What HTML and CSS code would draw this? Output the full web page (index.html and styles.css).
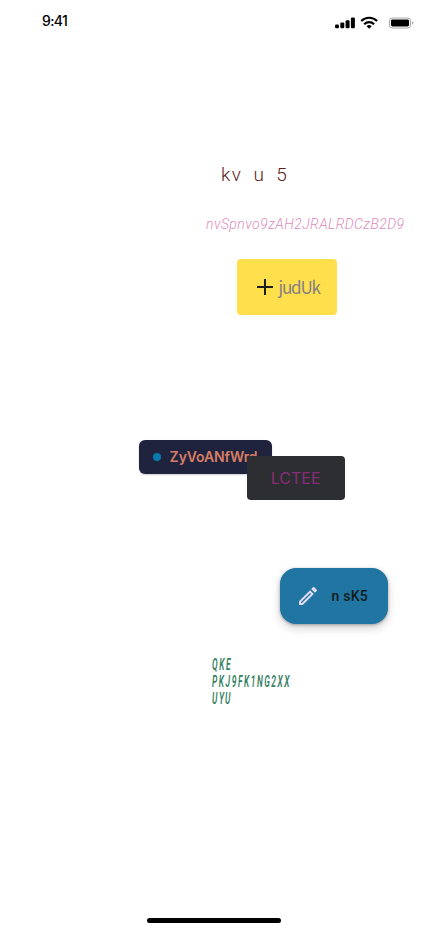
FILE: index.html
```
<!DOCTYPE html>
<html lang="en">
<head>
<meta charset="utf-8">
<meta name="viewport" content="width=device-width, initial-scale=1">
<title>Screen</title>
<link rel="stylesheet" href="styles.css">
</head>
<body>
<main class="screen">
  <header class="status">
    <span class="time">9:41</span>
    <svg class="indicators" width="80" height="14" viewBox="0 0 80 14">
      <rect x="0" y="8.5" width="4" height="3.7" rx="1.2"/>
      <rect x="5.3" y="6.5" width="4" height="5.7" rx="1.2"/>
      <rect x="10.6" y="4.2" width="4" height="8" rx="1.2"/>
      <rect x="15.9" y="1.5" width="4" height="10.7" rx="1.2"/>
      <g fill="none" stroke="#000" stroke-width="2.2">
        <path d="M26.2 5a11.3 11.3 0 0 1 15.9 0"/>
        <path d="M29.2 8.2a7 7 0 0 1 9.9 0"/>
      </g>
      <path d="M31.6 10.2a3.8 3.8 0 0 1 5.1 0L34.15 12.7z"/>
      <rect x="54.5" y="2" width="21" height="10" rx="2.8" fill="none" stroke="#a6a6a6"/>
      <rect x="56" y="3.5" width="18" height="7" rx="1.4"/>
      <path d="M77 5.2v3.6c.8-.3 1.3-1 1.3-1.8S77.8 5.5 77 5.2z" fill="#a6a6a6"/>
    </svg>
  </header>
  <h1 class="title">kv u 5</h1>
  <p class="code">nvSpnvo9zAH2JRALRDCzB2D9</p>
  <button class="add">
    <svg width="16" height="16" viewBox="0 0 16 16"><path d="M8 0v16M0 8h16" stroke="#1d1d1b" stroke-width="2"/></svg>
    <span class="add-label">judUk</span>
  </button>
  <div class="chip">
    <i class="dot"></i><span class="chip-label">ZyVoANfWrd</span>
    <button class="overlay"><span class="overlay-label">LCTEE</span></button>
  </div>
  <button class="edit">
    <svg width="24" height="24" viewBox="0 0 24 24"><path fill="#e4dcf8" d="M3 17.25V21h3.75L17.81 9.94l-3.75-3.75L3 17.25zM5.92 19H5v-.92l9.06-9.06.92.92L5.92 19zM20.71 5.63l-2.34-2.34a1 1 0 0 0-1.41 0l-1.83 1.83 3.75 3.75 1.83-1.83a1 1 0 0 0 0-1.41z"/></svg>
    <span class="edit-label">n sK5</span>
  </button>
  <p class="note">QKE<br>PKJ9FK1NG2XX<br>UYU</p>
  <div class="home"></div>
</main>
</body>
</html>
```
FILE: styles.css
```
* { box-sizing: border-box; }
body { margin: 0; background: #fff; }
button { border: 0; padding: 0; }
.screen {
  display: flex;
  flex-direction: column;
  align-items: flex-start;
  width: 428px;
  height: 926px;
  overflow: hidden;
  font-family: Roboto, sans-serif;
}
.status {
  display: flex;
  justify-content: space-between;
  width: 100%;
  height: 44px;
  padding: 12px 13px 0 42px;
}
.time { font: 500 14px/18px Inter, sans-serif; letter-spacing: -0.6px; }
.indicators { margin-top: 4px; }
.title {
  margin: 119px 0 0 221px;
  font-size: 19px;
  line-height: 24px;
  font-weight: 300;
  letter-spacing: 1.5px;
  word-spacing: 4.8px;
  color: #602020;
  white-space: nowrap;
}
.code {
  margin: 27px 0 0 206px;
  font-size: 14px;
  line-height: 20px;
  font-style: italic;
  font-weight: 300;
  letter-spacing: 0.44px;
  color: #dc8cbc;
  white-space: nowrap;
}
.add {
  display: flex;
  align-items: center;
  gap: 6px;
  width: 100px;
  height: 56px;
  margin: 25px 0 0 236.5px;
  padding-left: 20px;
  border-radius: 4px;
  background: #ffdf4b;
}
.add-label { font: 400 17px/24px "Noto Sans CJK SC", sans-serif; letter-spacing: -1.2px; color: #858085; }
.chip {
  position: relative;
  display: flex;
  align-items: center;
  width: 133px;
  height: 34px;
  margin: 125px 0 0 138.6px;
  padding-left: 14px;
  border-radius: 6px;
  background: #20233d;
  box-shadow: 0 1px 2px #0003;
}
.dot { width: 8px; height: 8px; margin-right: 9px; border-radius: 50%; background: #0879ad; }
.chip-label { font: 600 14px/20px Inter, sans-serif; letter-spacing: -0.1px; color: #d77e66; }
.overlay {
  position: absolute;
  left: 108px;
  top: 16px;
  width: 98px;
  height: 44px;
  border-radius: 4px;
  background: #2d2e32;
}
.overlay-label { font: 400 16px/24px Inter, sans-serif; color: #872d78; }
.edit {
  display: flex;
  align-items: center;
  gap: 12px;
  width: 108px;
  height: 56px;
  margin: 94px 0 0 279.6px;
  padding-left: 16px;
  border-radius: 16px;
  background: #2075a3;
  box-shadow: 0 4px 8px 1px #00000026, 0 1px 3px #0000004d;
}
.edit-label { font: 500 14px/20px Roboto, sans-serif; letter-spacing: 0.2px; color: #101c1c; white-space: nowrap; }
.note {
  margin: 32px 0 0 212px;
  font: italic 600 16px/17px Roboto, sans-serif;
  letter-spacing: 3px;
  color: #348060;
  transform: scaleX(0.525);
  transform-origin: left;
}
.home { width: 134px; height: 5px; margin: 211px 0 0 147px; border-radius: 3px; background: #000; }
```
